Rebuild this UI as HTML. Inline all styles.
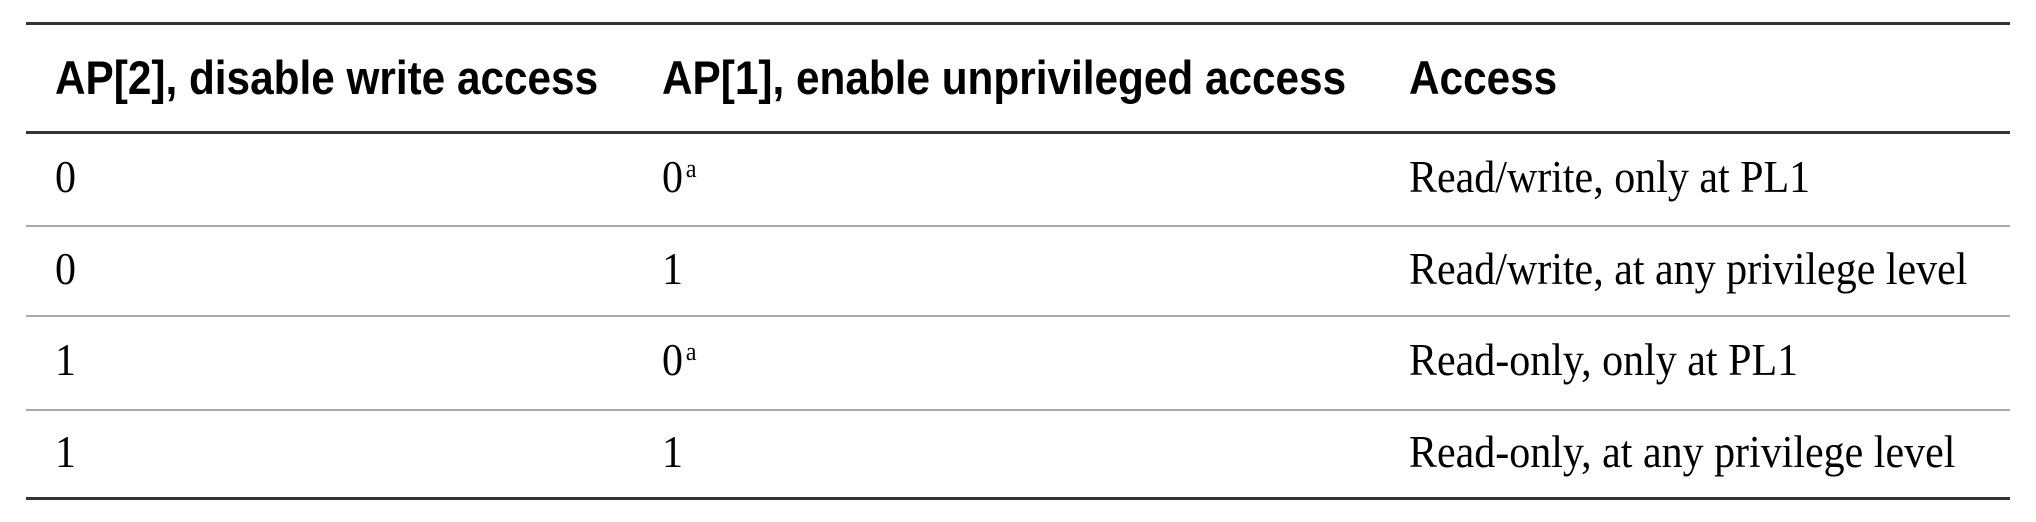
<!DOCTYPE html>
<html><head><meta charset="utf-8"><style>
html,body{margin:0;padding:0;background:#fff;width:2036px;height:522px;overflow:hidden;position:relative}
.l{position:absolute;left:26px;width:1984px;background:#333}
.t{position:absolute;white-space:nowrap;line-height:1}
.h{font-family:"Liberation Sans",sans-serif;font-weight:bold;font-size:47px;color:#000;transform:scaleX(0.9);transform-origin:left center}
.b{font-family:"Liberation Serif",serif;font-size:45px;color:#000;transform:scaleX(0.933);transform-origin:left center}
sup{font-size:26px;vertical-align:0;position:relative;top:-15px;margin-left:3px}
</style></head><body>
<div class="l" style="top:22px;height:3px"></div>
<div class="l" style="top:131px;height:3px"></div>
<div class="l" style="top:225px;height:2px;background:#aaa"></div>
<div class="l" style="top:315px;height:2px;background:#aaa"></div>
<div class="l" style="top:409px;height:2px;background:#aaa"></div>
<div class="l" style="top:497px;height:3px"></div>

<div class="t h" style="left:55px;top:54px">AP[2], disable write access</div>
<div class="t h" style="left:662px;top:54px">AP[1], enable unprivileged access</div>
<div class="t h" style="left:1409px;top:54px">Access</div>

<div class="t b" style="left:55px;top:155px">0</div>
<div class="t b" style="left:662px;top:155px">0<sup>a</sup></div>
<div class="t b" style="left:1409px;top:155px">Read/write, only at PL1</div>

<div class="t b" style="left:55px;top:247px">0</div>
<div class="t b" style="left:662px;top:247px">1</div>
<div class="t b" style="left:1409px;top:247px">Read/write, at any privilege level</div>

<div class="t b" style="left:55px;top:338px">1</div>
<div class="t b" style="left:662px;top:338px">0<sup>a</sup></div>
<div class="t b" style="left:1409px;top:338px">Read-only, only at PL1</div>

<div class="t b" style="left:55px;top:430px">1</div>
<div class="t b" style="left:662px;top:430px">1</div>
<div class="t b" style="left:1409px;top:430px">Read-only, at any privilege level</div>
</body></html>
